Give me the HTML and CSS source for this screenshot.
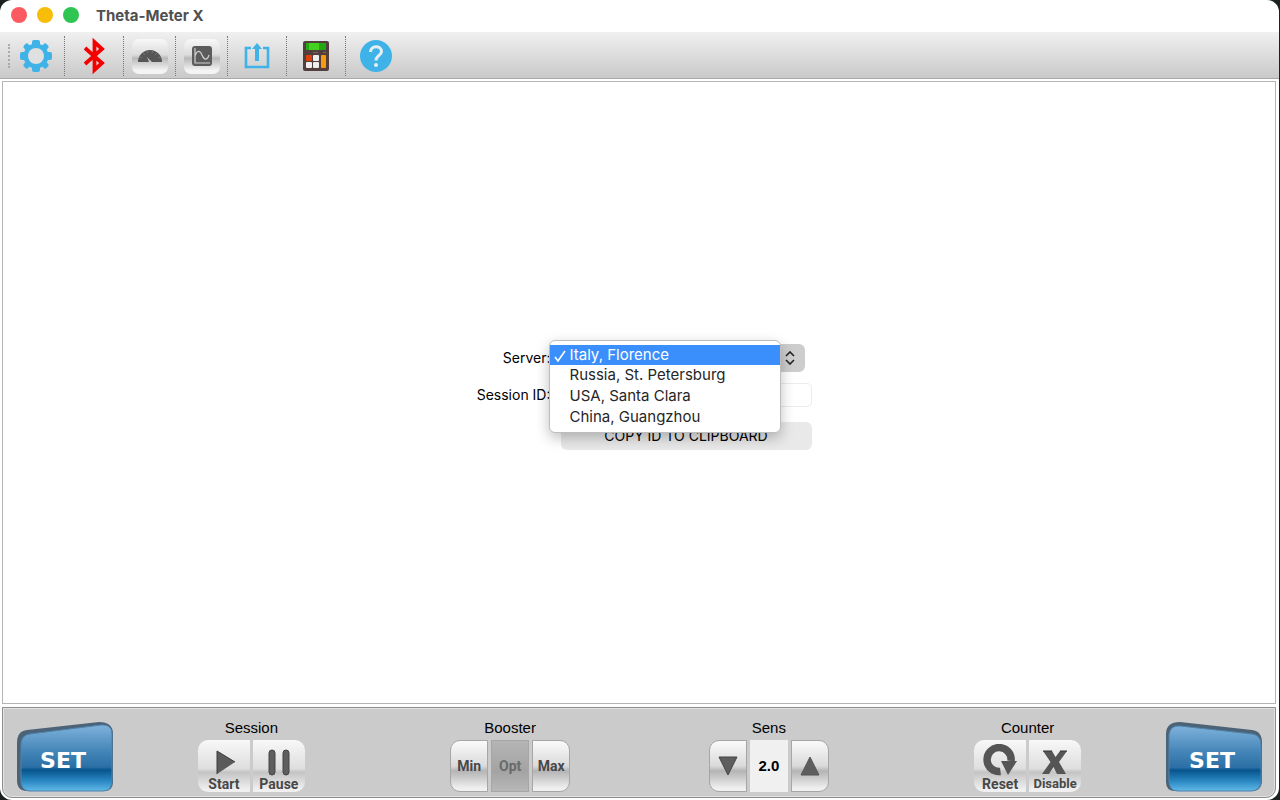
FILE: index.html
```
<!DOCTYPE html>
<html lang="en">

<head>
    <meta charset="utf-8" />
    <title>Theta-Meter X</title>
    <link rel="stylesheet" href="styles.css">
</head>

<body>
    <div class="window">
        <header class="titlebar">
            <button class="light close" aria-label="Close"></button>
            <button class="light minimize" aria-label="Minimize"></button>
            <button class="light maximize" aria-label="Zoom"></button>
            <h1>Theta-Meter X</h1>
        </header>

        <nav class="toolbar">
            <span class="handle"></span>
            <button class="tool" aria-label="Settings">
                <svg width="34" height="34" viewBox="0 0 34 34">
                    <g fill="#3fb3e8">
                        <rect x="13" y="1" width="8" height="32" rx="2" />
                        <rect x="14" y="1" width="6" height="32" rx="2" transform="rotate(45 17 17)" />
                        <rect x="13" y="1" width="8" height="32" rx="2" transform="rotate(90 17 17)" />
                        <rect x="14" y="1" width="6" height="32" rx="2" transform="rotate(135 17 17)" />
                        <circle cx="17" cy="17" r="12.500" />
                    </g>
                    <circle cx="17" cy="17" r="8" fill="#e0e0e0" />
                </svg>
            </button>
            <button class="tool wide" aria-label="Bluetooth">
                <svg width="24" height="38" viewBox="0 0 24 38">
                    <path d="M3 11 L20 26 L12.500 33 V5 L20 12 L3 27" fill="none" stroke="#f40000" stroke-width="3.800" />
                </svg>
            </button>
            <button class="tool" aria-label="Meter">
                <span class="chrome">
                    <svg width="26" height="16" viewBox="0 0 26 16">
                        <path d="M1 14 A12 12 0 0 1 25 14 H15 L10 9 L12 14 Z" fill="#565656" />
                        <path d="M3 9 l2 1 M6 5 l2 2 M10 2 l1 3 M16 2 l-1 3 M20 5 l-2 2 M23 9 l-2 1" stroke="#777" stroke-width="1" />
                    </svg>
                </span>
            </button>
            <button class="tool" aria-label="Graph">
                <span class="chrome">
                    <svg width="22" height="22" viewBox="0 0 22 22">
                        <rect x="1" y="1" width="20" height="20" rx="3" fill="#5c5c5c" />
                        <path d="M4 3 V18 H19 M4 11 C6 5 9 5 11 10 C13 15 16 16 18 10" fill="none" stroke="#d0d0d0" stroke-width="1.2" />
                    </svg>
                </span>
            </button>
            <button class="tool wide" aria-label="Share">
                <svg width="28" height="28" viewBox="0 0 28 28">
                    <path d="M8 6 H3 V25 H25 V6 H20" fill="none" stroke="#3fb3e8" stroke-width="2.6" />
                    <path d="M14 1 L19 7 H16 V19 H12 V7 H9 Z" fill="#3fb3e8" />
                </svg>
            </button>
            <button class="tool wide" aria-label="Calculator">
                <svg width="26" height="30" viewBox="0 0 26 30">
                    <rect width="26" height="30" rx="2" fill="#523f3d" />
                    <rect x="3" y="2" width="20" height="7" fill="#22a812" />
                    <rect x="6" y="2" width="10" height="7" fill="#43d01e" />
                    <path d="M10 11.5 h5 M20 11.5 h3" stroke="#776663" />
                    <rect x="3" y="14" width="6" height="6" rx="1" fill="#e0410c" />
                    <rect x="10" y="14" width="6" height="6" rx="1" fill="#eee" />
                    <rect x="3" y="21" width="6" height="6" rx="1" fill="#eee" />
                    <rect x="10" y="21" width="6" height="6" rx="1" fill="#eee" />
                    <rect x="18" y="14" width="5" height="13" rx="1" fill="#f79b0b" />
                </svg>
            </button>
            <button class="tool wide" aria-label="Help">
                <svg width="32" height="32" viewBox="0 0 32 32">
                    <circle cx="16" cy="16" r="16" fill="#3fb3e8" />
                    <path d="M10.500 12 C10.500 5 21.500 5 21.500 11.500 C21.500 15.500 16 15.500 16 20.500" fill="none" stroke="#e4eef3" stroke-width="3" />
                    <circle cx="16" cy="25" r="2" fill="#e4eef3" />
                </svg>
            </button>
        </nav>

        <main class="content">
            <form class="connect">
                <label for="server">Server:</label>
                <div class="server-field">
                    <select id="server">
                        <option></option>
                        <option>Italy, Florence</option>
                        <option>Russia, St. Petersburg</option>
                        <option>USA, Santa Clara</option>
                        <option>China, Guangzhou</option>
                    </select>
                    <svg class="arrows" width="10" height="14" viewBox="0 0 10 14">
                        <path d="M1 5 L5 1 L9 5 M1 9 L5 13 L9 9" fill="none" stroke="#222" stroke-width="1.6" />
                    </svg>
                    <ul class="menu">
                        <li class="selected">
                            <svg class="check" width="12" height="13" viewBox="0 0 12 13">
                                <path d="M1 7 L4 11 L11 1" fill="none" stroke="#fff" stroke-width="1.6" />
                            </svg>Italy, Florence</li>
                        <li>Russia, St. Petersburg</li>
                        <li>USA, Santa Clara</li>
                        <li>China, Guangzhou</li>
                    </ul>
                </div>

                <label for="session">Session ID:</label>
                <input type="text" id="session">

                <button type="button" class="copy">COPY ID TO CLIPBOARD</button>
            </form>
        </main>

        <footer class="panel">
            <button class="set">
                <svg width="96" height="70" viewBox="0 0 96 70">
                    <defs>
                        <linearGradient id="blue" x1="0" y1="0" x2="0" y2="1">
                            <stop offset="0" stop-color="#7fb2dc" />
                            <stop offset="0.4" stop-color="#4485b7" />
                            <stop offset="0.64" stop-color="#2a6fa5" />
                            <stop offset="0.68" stop-color="#07548c" />
                            <stop offset="0.85" stop-color="#2a88c2" />
                            <stop offset="1" stop-color="#62b9e8" />
                        </linearGradient>
                    </defs>
                    <path d="M0 21 Q0 9 10 8 L82 0 Q96 0 96 12 V60 Q96 69 87 69 H10 Q0 69 0 58 Z" fill="#4c6377" />
                    <path d="M4 23 Q4 13 13 12 L84 3 Q95 2 95 12 V59 Q95 69 86 69 H12 Q4 68 4 59 Z" fill="url(#blue)" stroke="#4e83ab" />
                </svg>
                <span>SET</span>
            </button>

            <section class="group">
                <h2>Session</h2>
                <div class="buttons">
                    <button class="key tall">
                        <svg width="22" height="27" viewBox="0 0 22 27">
                            <path d="M4 2 L22 13 L4 25 Z" fill="#5a5a5a" />
                            <path d="M4 25 V2 L22 13" fill="none" stroke="#3c3c3c" />
                        </svg>
                        Start
                    </button>
                    <button class="key tall">
                        <svg width="22" height="27" viewBox="0 0 22 27">
                            <rect x="1" y="1" width="6" height="25" rx="3" fill="#5e5e5e" stroke="#444" />
                            <rect x="15" y="1" width="6" height="25" rx="3" fill="#5e5e5e" stroke="#444" />
                        </svg>
                        Pause
                    </button>
                </div>
            </section>

            <section class="group">
                <h2>Booster</h2>
                <div class="buttons">
                    <button class="key">Min</button>
                    <button class="key pressed">Opt</button>
                    <button class="key">Max</button>
                </div>
            </section>

            <section class="group">
                <h2>Sens</h2>
                <div class="buttons">
                    <button class="key" aria-label="Decrease">
                        <svg width="20" height="20" viewBox="0 0 20 20">
                            <path d="M1 1 H19 L10 19 Z" fill="#5e5e5e" stroke="#444" />
                        </svg>
                    </button>
                    <output class="value">2.0</output>
                    <button class="key" aria-label="Increase">
                        <svg width="20" height="20" viewBox="0 0 20 20">
                            <path d="M10 1 L19 19 H1 Z" fill="#5e5e5e" stroke="#555" />
                        </svg>
                    </button>
                </div>
            </section>

            <section class="group">
                <h2>Counter</h2>
                <div class="buttons">
                    <button class="key tall">
                        <svg width="34" height="32" viewBox="0 0 34 32">
                            <path d="M17.500 27.500 A12 12 0 1 1 28 17" fill="none" stroke="#555" stroke-width="7.500" />
                            <path d="M18 17 H34 L25 31 Z" fill="#555" />
                        </svg>
                        Reset
                    </button>
                    <button class="key tall small">
                        <svg width="26" height="27" viewBox="0 0 26 27">
                            <path d="M1 2 H10 L13.500 8 L18 2 H25 L17 13 L24 25 H15 L11.500 18 L7 25 H0 L8.500 13 Z" fill="#555" />
                            <path d="M1 2 H10 M18 2 H25" stroke="#333" />
                        </svg>
                        Disable
                    </button>
                </div>
            </section>

            <button class="set">
                <svg width="96" height="70" viewBox="0 0 96 70">
                    <path d="M96 21 Q96 9 86 8 L14 0 Q0 0 0 12 V60 Q0 69 9 69 H86 Q96 69 96 58 Z" fill="#4c6377" />
                    <path d="M95 23 Q95 13 86 12 L14 4 Q4 3 3 13 V59 Q3 69 12 69 H86 Q95 68 95 59 Z" fill="url(#blue)" stroke="#4e83ab" />
                </svg>
                <span>SET</span>
            </button>
        </footer>
    </div>
</body>

</html>
```
FILE: styles.css
```
* {
    box-sizing: border-box;
}

body {
    margin: 0;
    padding-right: 1px;
    background: #1b211d;
    font: 15px Inter, sans-serif;
    color: #111;
}

button {
    border: 0;
    padding: 0;
    background: none;
    color: inherit;
    font: inherit;
}

svg {
    display: block;
}

.window {
    display: flex;
    flex-direction: column;
    min-height: 100vh;
    background: #fff;
    border-radius: 12px;
    overflow: hidden;
}

/* Title bar */
.titlebar {
    display: flex;
    align-items: center;
    gap: 10px;
    height: 32px;
    padding: 0 11px 2px;
}

.titlebar h1 {
    margin: 0 0 0 7px;
    font-size: 15px;
    font-weight: 700;
    color: #505050;
}

.light {
    width: 16px;
    height: 16px;
    border-radius: 50%;
}

.close {
    background: #fb5b60;
}

.minimize {
    background: #f8bd09;
}

.maximize {
    background: #2fc552;
}

/* Toolbar */
.toolbar {
    display: flex;
    align-items: center;
    height: 47px;
    padding: 2px 8px 0;
    background: linear-gradient(#f0f0f0, #c9c9c9);
    border-bottom: 1px solid #a9a9a9;
}

.handle {
    height: 24px;
    border-left: 2px dotted #aaa;
}

.tool {
    display: flex;
    align-items: center;
    justify-content: center;
    width: 52px;
    height: 40px;
    border-right: 1px dotted #777;
}

.handle + .tool {
    width: 55px;
    padding-right: 3px;
}

.tool.wide {
    width: 59px;
}

.tool:last-child {
    border-right: 0;
}

.chrome {
    display: flex;
    align-items: center;
    justify-content: center;
    width: 36px;
    height: 35px;
    border-radius: 7px;
    background: linear-gradient(#f8f8f8, #dcdcdc 45%, #b9b9b9 55%, #f4f4f4 90%);
}

/* Content */
.content {
    flex: 1;
    display: flex;
    align-items: center;
    justify-content: center;
    margin: 2px 3px 3px 2px;
    padding: 8px 0 0 8px;
    border: 1px solid #b5b5b5;
}

.connect {
    display: grid;
    grid-template-columns: 76px 251px;
    grid-template-rows: 28px 24px 32px;
    align-items: center;
    column-gap: 10px;
    row-gap: 11px;
    font-size: 14px;
}

.connect label {
    text-align: right;
    white-space: nowrap;
    color: #000;
}

.server-field {
    position: relative;
    width: 244px;
    height: 28px;
}

.server-field select {
    appearance: none;
    width: 100%;
    height: 28px;
    border: 0;
    border-radius: 6px;
    background: #cdcdcd;
    font: inherit;
}

.arrows {
    position: absolute;
    right: 10px;
    top: 7px;
}

.menu {
    position: absolute;
    left: -12px;
    top: -4px;
    display: grid;
    grid-auto-rows: 1fr;
    width: 232px;
    height: 93px;
    margin: 0;
    padding: 4px 0;
    list-style: none;
    background: #fff;
    border: 1px solid #bdbdbd;
    border-radius: 6px;
    box-shadow: 0 5px 14px rgba(0, 0, 0, 0.25);
    font-size: 15px;
    color: #262626;
}

.menu li {
    position: relative;
    padding-left: 20px;
    line-height: 20px;
}

.menu .selected {
    background: #3b8ffd;
    color: #fff;
}

.check {
    position: absolute;
    left: 4px;
    top: 5px;
}

#session {
    width: 100%;
    height: 24px;
    border: 1px solid #ececec;
    border-radius: 5px;
    font: inherit;
}

.copy {
    grid-column: 2;
    align-self: end;
    height: 28px;
    border-radius: 6px;
    background: #e9e9e9;
    color: #000;
}

/* Bottom panel */
.panel {
    display: flex;
    height: 91px;
    margin: 0 3px 2px 2px;
    padding: 0 12px 0 13px;
    background: #cbcbcb;
    border: 2px solid #e2e2e2;
    outline: 1px solid #8d8d8d;
    outline-offset: -1px;
    border-radius: 0 0 10px 10px;
}

.set {
    display: grid;
    width: 96px;
    height: 70px;
    margin: 13px 9px 0 0;
    color: #fff;
    font: bold 22px "DejaVu Sans", sans-serif;
}

.set:last-child {
    margin: 13px 0 0 9px;
}

.set svg,
.set span {
    grid-area: 1 / 1;
}

.set span {
    align-self: center;
    padding-top: 6px;
    padding-right: 4px;
}

.group {
    flex: 1;
    display: flex;
    flex-direction: column;
    align-items: center;
    padding-top: 9px;
}

.group h2 {
    margin: 0 0 2px;
    font: 15px/20px "Liberation Sans", sans-serif;
    color: #000;
}

.buttons {
    display: flex;
    gap: 3px;
    height: 52px;
}

.key {
    display: flex;
    align-items: center;
    justify-content: center;
    width: 38px;
    border: 1px solid #a6a6a6;
    background: linear-gradient(#fafafa, #dadada 50%, #b4b4b4 60%, #f0f0f0 95%);
    font: bold 14px Roboto, sans-serif;
    color: #484848;
}

.key:first-child {
    border-radius: 10px 0 0 10px;
}

.key:last-child {
    border-radius: 0 10px 10px 0;
}

.key.pressed {
    background: linear-gradient(#b5b5b5, #a3a3a3 60%, #b8b8b8);
    color: #6a6a6a;
}

.key.tall {
    flex-direction: column;
    justify-content: flex-end;
    width: 52px;
    border: 0;
    background: linear-gradient(#f8f8f8, #dedede 55%, #c4c4c4 62%, #f0f0f0 95%);
    line-height: 16px;
}

.key.small {
    font-size: 13px;
}

.value {
    width: 38px;
    background: #f0f0f0;
    font: bold 15px/52px "Liberation Sans", sans-serif;
    text-align: center;
    color: #000;
}
```
